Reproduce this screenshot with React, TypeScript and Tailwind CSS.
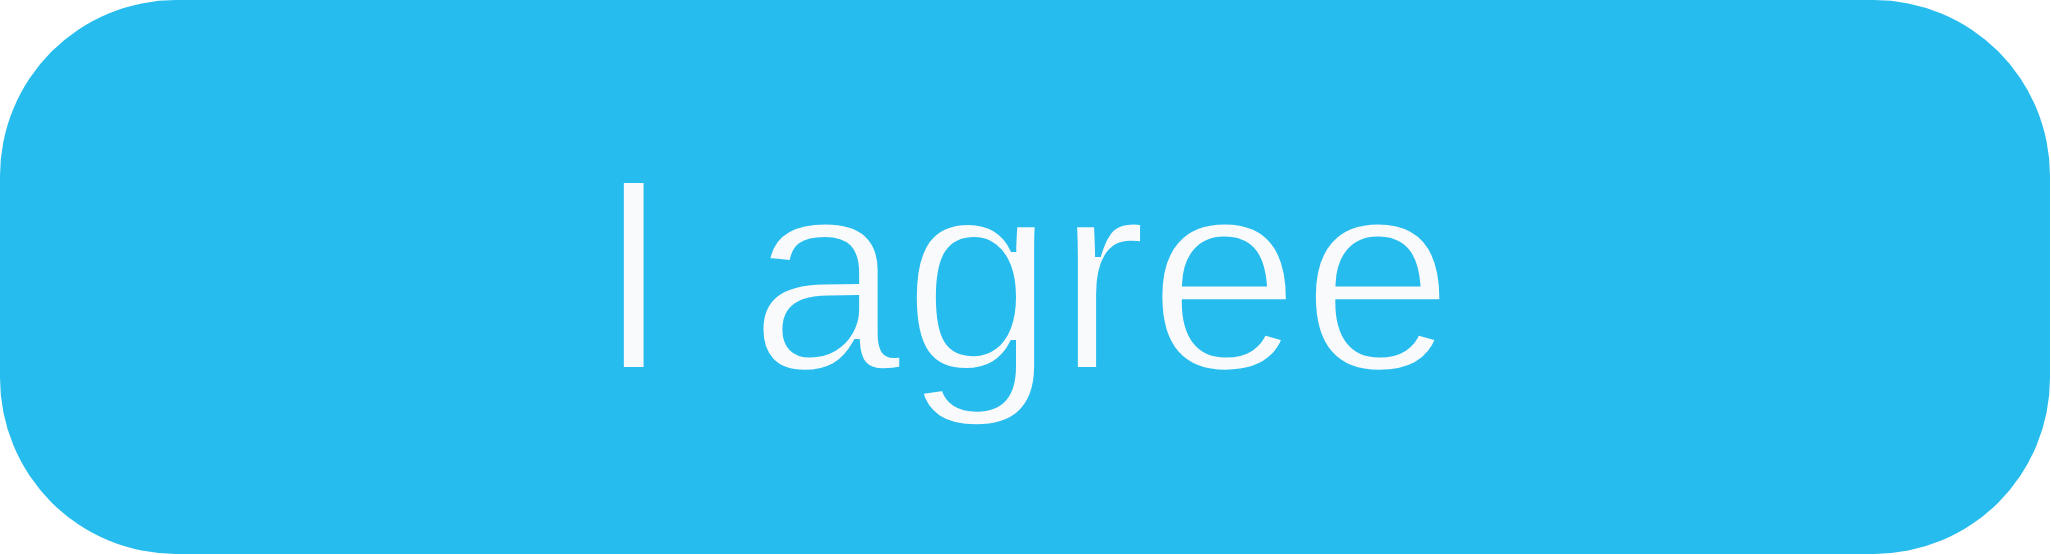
import React from "react";

export default function App() {
  return (
    <div className="w-[2051px] h-[555px] bg-white">
      <button
        type="button"
        className="w-[2050px] h-[554px] rounded-[176px] bg-[#27bcee] flex items-center justify-center pb-[6px] text-[#f8fafc] text-[276px] leading-none [font-family:'Liberation_Sans',Arial,sans-serif] [-webkit-text-stroke:6px_#27bcee]"
      >
        I agree
      </button>
    </div>
  );
}
